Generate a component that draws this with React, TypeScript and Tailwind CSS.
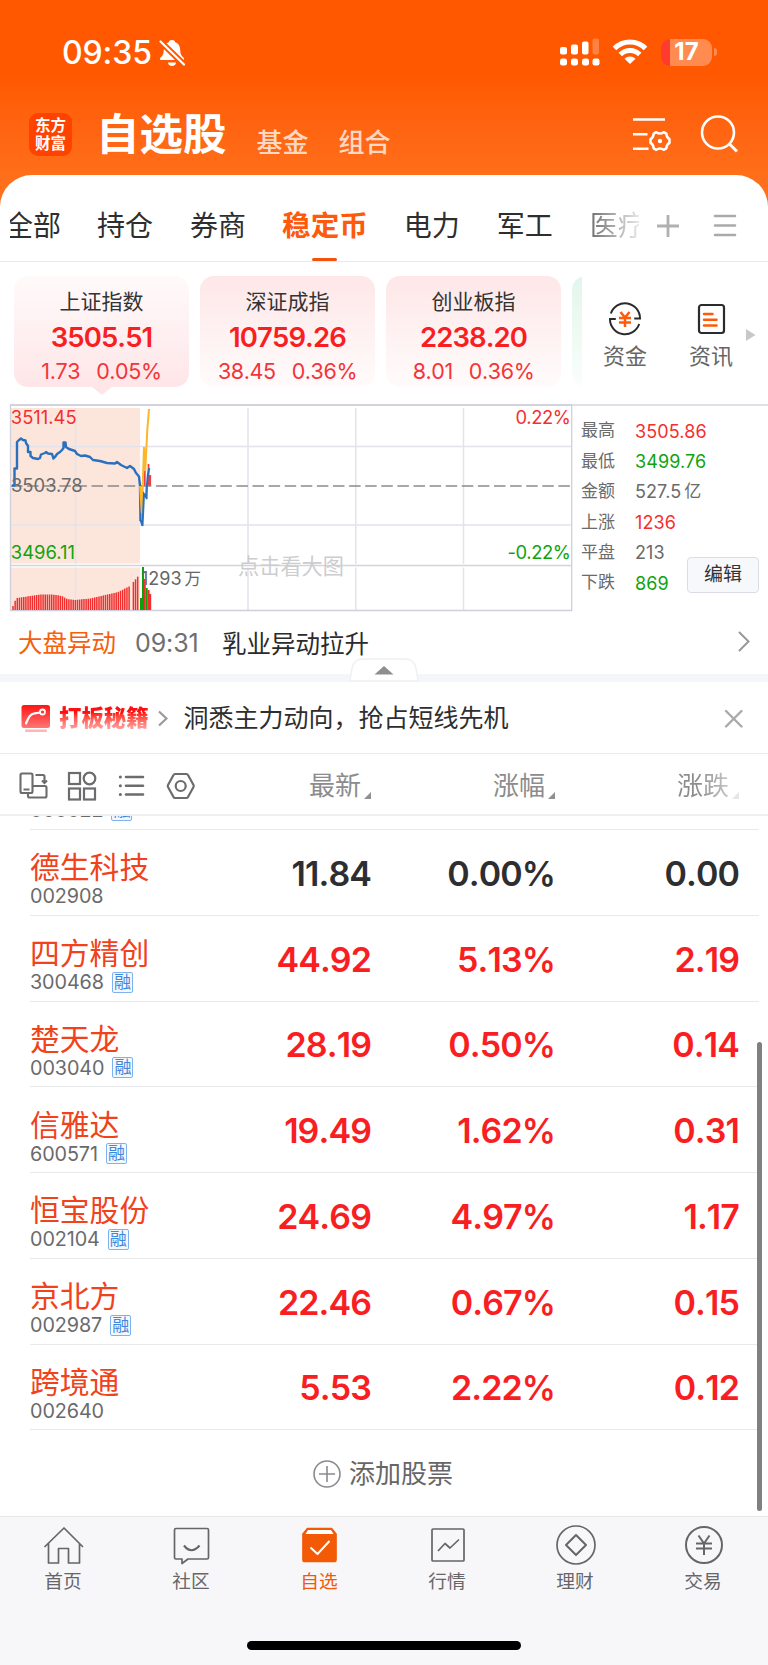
import type { ReactNode } from "react"

type Stock = {
  name: string
  code: string
  margin: boolean
  price: string
  percent: string
  change: string
  flat?: boolean
}

const stocks: Stock[] = [
  { name: "德生科技", code: "002908", margin: false, price: "11.84", percent: "0.00%", change: "0.00", flat: true },
  { name: "四方精创", code: "300468", margin: true, price: "44.92", percent: "5.13%", change: "2.19" },
  { name: "楚天龙", code: "003040", margin: true, price: "28.19", percent: "0.50%", change: "0.14" },
  { name: "信雅达", code: "600571", margin: true, price: "19.49", percent: "1.62%", change: "0.31" },
  { name: "恒宝股份", code: "002104", margin: true, price: "24.69", percent: "4.97%", change: "1.17" },
  { name: "京北方", code: "002987", margin: true, price: "22.46", percent: "0.67%", change: "0.15" },
  { name: "跨境通", code: "002640", margin: false, price: "5.53", percent: "2.22%", change: "0.12" },
]

const indices = [
  { name: "上证指数", value: "3505.51", diff: "1.73", percent: "0.05%", active: true },
  { name: "深证成指", value: "10759.26", diff: "38.45", percent: "0.36%", active: false },
  { name: "创业板指", value: "2238.20", diff: "8.01", percent: "0.36%", active: false },
]

const summary = [
  { label: "最高", value: "3505.86", color: "text-[#f52f2f]" },
  { label: "最低", value: "3499.76", color: "text-[#0fa30f]" },
  { label: "金额", value: "527.5", unit: "亿", color: "text-[#6b6b6b]" },
  { label: "上涨", value: "1236", color: "text-[#f52f2f]" },
  { label: "平盘", value: "213", color: "text-[#6b6b6b]" },
  { label: "下跌", value: "869", color: "text-[#0fa30f]" },
]

const StatusBar = () => (
  <div className="flex h-[104px] items-center pl-[62px] pr-[51px] text-white">
    <span className="pt-[2px] text-[32px] leading-none font-medium tracking-[-0.1px]">09:35</span>
    <svg className="ml-[7px] mt-[2px]" width="26" height="28" viewBox="0 0 26 28" fill="none">
      <path d="M13 1c-1.700 0-3 .8-3.200 2.200C6.500 4.300 5 7 4.800 11c-.1 4-1 5.500-3 7.300C.3 19.800.8 21 2.300 21h21.400c1.500 0 2-1.200.5-2.700-2-1.800-2.900-3.300-3-7.300-.2-4-1.700-6.700-5-7.800C16 1.800 14.700 1 13 1z" fill="#fff" />
      <path d="M9 23.500h8c0 2-1.800 3.500-4 3.500s-4-1.500-4-3.500z" fill="#fff" />
      <path d="M1 2L25 25.500" stroke="#ff5800" strokeWidth="6" />
      <path d="M1.500 2.500L25 25.500" stroke="#fff" strokeWidth="2.200" strokeLinecap="round" />
    </svg>
    <div className="grow" />
    <svg width="40" height="28" viewBox="0 0 40 28" fill="#fff">
      <rect x="0" y="9" width="7" height="7.500" rx="2" />
      <rect x="11" y="6.500" width="7" height="10" rx="2" />
      <rect x="22" y="3.500" width="6.500" height="13" rx="2" />
      <rect x="32.500" y="0.500" width="6.500" height="16" rx="2" opacity=".25" />
      <rect x="0" y="20.500" width="7" height="7" rx="2.200" />
      <rect x="11" y="20.500" width="7" height="7" rx="2.200" />
      <rect x="22" y="20.500" width="7" height="7" rx="2.200" />
      <rect x="32.500" y="20.500" width="7" height="7" rx="2.200" />
    </svg>
    <svg className="ml-3" width="36" height="26" viewBox="0 0 36 26" fill="none" stroke="#fff" strokeWidth="5">
      <path d="M2.500 9.500a22 22 0 0 1 31 0" />
      <path d="M8.300 15.500a13.800 13.800 0 0 1 19.400 0" />
      <path d="M18 25l-5.500-5.200a8 8 0 0 1 11 0z" fill="#fff" stroke="none" />
    </svg>
    <div className="ml-[13px] flex h-[27px] w-[51px] items-center justify-center overflow-hidden rounded-[9px] bg-[linear-gradient(90deg,#ff3b30_0_9px,#ff8b50_9px)] text-[24px] leading-none font-bold">
      17
    </div>
    <div className="ml-[2px] h-2 w-[3px] rounded-r-full bg-[#ff8b50]" />
  </div>
)

const TitleBar = () => (
  <div className="flex h-[71px] items-start pl-[29px] text-white">
    <div className="mt-[9px] flex h-[43px] w-[43px] flex-col items-center justify-center rounded-[9px] bg-[#ff4200] text-[15.500px] leading-[18px] font-bold">
      <span>东方</span>
      <span>财富</span>
    </div>
    <h1 className="ml-[24px] mt-px text-[43.500px] leading-[58px] font-bold">自选股</h1>
    <span className="ml-[30px] mt-[19px] text-[26px] leading-[40px] font-medium text-white/75">基金</span>
    <span className="ml-[30px] mt-[19px] text-[26px] leading-[40px] font-medium text-white/75">组合</span>
    <div className="grow" />
    <svg className="mt-[12px]" width="40" height="38" viewBox="0 0 40 38" fill="none" stroke="#fff" strokeWidth="2.600">
      <path d="M1 3.500h32M1 18.300h14.500M1 32.700h15.500" />
      <path d="M24.300 16.200q3.700 2.600 7.400 0l2.600 1.500q.3 4 3.200 5.500v3.600q-2.900 1.500-3.200 5.500l-2.600 1.500q-3.700-2.600-7.400 0l-2.600-1.500q-.3-4-3.200-5.500v-3.600q2.900-1.500 3.200-5.500z" strokeWidth="2.500" strokeLinejoin="round" />
      <circle cx="28" cy="25" r="2.200" fill="#fff" stroke="none" />
    </svg>
    <svg className="ml-[28px] mr-[28px] mt-[10px]" width="40" height="40" viewBox="0 0 40 40" fill="none" stroke="#fff" strokeWidth="2.600">
      <circle cx="18" cy="18.500" r="16" />
      <path d="M29 29.500l8 8" strokeWidth="3" />
    </svg>
  </div>
)

const Tabs = () => (
  <div className="flex h-[87px] items-stretch border-b border-[#eaeaec] text-[28px] leading-[102px] text-[#2e2e30]">
    <div className="ml-[10px] flex w-[51px] justify-end overflow-hidden whitespace-nowrap">
      <span>全部</span>
    </div>
    <span className="ml-[36px]">持仓</span>
    <span className="ml-[37px]">券商</span>
    <div className="ml-[36px] flex flex-col items-center">
      <span className="h-[83px] text-[28.600px] font-bold text-[#ff5a0a]">稳定币</span>
      <div className="h-[3px] w-[25px] rounded-sm bg-[#f4520d]" />
    </div>
    <span className="ml-[36px]">电力</span>
    <span className="ml-[37px]">军工</span>
    <div className="ml-[37px] w-[49px] overflow-hidden whitespace-nowrap bg-[linear-gradient(90deg,#6f6f70,#e8e8e8)] bg-clip-text text-transparent">
      医疗
    </div>
    <svg className="ml-[17px] mt-[39px]" width="24" height="24" viewBox="0 0 24 24" stroke="#b0b0b0" strokeWidth="2.800">
      <path d="M12 1v22M1 12h22" />
    </svg>
    <svg className="ml-[33px] mt-[39px]" width="24" height="24" viewBox="0 0 24 24" stroke="#aaa" strokeWidth="2.600" strokeLinecap="round">
      <path d="M2 2h20M2 11.500h20M2 21h20" />
    </svg>
  </div>
)

const IndexStrip = () => (
  <div className="flex h-[142px] pt-[14px] pl-[14px]">
    <div className="flex w-[568px] gap-[11px] overflow-hidden">
      {indices.map((item) => (
        <div key={item.name} className="flex shrink-0 flex-col items-center">
          <div
            className={
              item.active
                ? "flex h-[111px] w-[175px] flex-col items-center rounded-[14px] bg-linear-to-b from-[#fffafa] to-[#fee6e8]"
                : "flex h-[111px] w-[175px] flex-col items-center rounded-[14px] bg-linear-to-b from-[#fee7e8] to-[#fffbfb]"
            }
          >
            <span className="mt-[11px] text-[21px] leading-[30px] text-[#333]">{item.name}</span>
            <span className="mt-[4px] text-[27.500px] leading-[32px] font-semibold tracking-[-0.900px] text-[#f81e22] [font-kerning:none]">
              {item.value}
            </span>
            <span className="mt-[5px] flex gap-[16px] text-[21.500px] leading-[26px] tracking-[-0.400px] text-[#f43438] [font-kerning:none]">
              <span>{item.diff}</span>
              <span>{item.percent}</span>
            </span>
          </div>
          {item.active && (
            <svg width="20" height="8" viewBox="0 0 20 8">
              <path d="M0 0h20l-10 8z" fill="#fee6e8" />
            </svg>
          )}
        </div>
      ))}
      <div className="h-[111px] w-[175px] shrink-0 rounded-[14px] bg-linear-to-b from-[#e2f6ec] to-[#fafefc]" />
    </div>
    <div className="ml-[20px] flex flex-col items-center pt-[26px] text-[22px] text-[#666]">
      <svg className="ml-px" width="34" height="34" viewBox="0 0 34 34" fill="none" stroke="#2b2b2b" strokeWidth="2">
        <path d="M2.800 11.500A15 15 0 0 1 32 16.500h-5.800" />
        <path d="M31.200 22A15 15 0 0 1 2 17h5.800" />
        <path d="M12.500 10l4.500 5.500 4.500-5.500M11 16h12M11 20.500h12M17 15.500v9.500" stroke="#ff5a0a" strokeWidth="2.500" />
      </svg>
      <span className="mt-[3px] ml-px leading-[34px]">资金</span>
    </div>
    <div className="ml-[41px] flex flex-col items-center pt-[26px] text-[22px] text-[#666]">
      <svg className="ml-px" width="34" height="34" viewBox="0 0 34 34" fill="none" stroke="#2b2b2b" strokeWidth="2.200">
        <rect x="5" y="3" width="25" height="28" rx="2.500" />
        <path d="M10 12h8.500M10 17.700h12.500M10 23.500h12.500" stroke="#ff5a0a" strokeWidth="2.500" strokeLinecap="round" />
      </svg>
      <span className="mt-[3px] ml-px leading-[34px]">资讯</span>
    </div>
    <svg className="ml-[13px] mt-[53px]" width="10" height="12" viewBox="0 0 10 12">
      <path d="M0 0l9.500 6L0 12z" fill="#c8c8c8" />
    </svg>
  </div>
)

// [x, height] samples of the volume curve, bars are interpolated between them
const volume = [
  [13, 4], [15, 9], [17, 12], [27, 13.5], [40, 15.5], [53, 15.500], [62, 14], [67, 11],
  [75, 10], [90, 11.500], [105, 15], [118, 18], [130, 24], [135, 30], [139, 35],
]

const volumeAt = (x: number) => {
  const i = Math.max(1, volume.findIndex(([vx]) => vx >= x))
  const [x0, h0] = volume[i - 1]
  const [x1, h1] = volume[i]
  return h0 + ((h1 - h0) * (x - x0)) / (x1 - x0)
}

const bars = Array.from({ length: 59 }, (_, i) => 13 + i * 2.15).filter((_, i) => i !== 55)

const priceLine =
  "12,485.500 14.500,485.500 14.500,468.500 17,468.500 17,442 19,440 21,438.500 23,440 25.500,440.500 26,443 28,446 28,452 30.500,452 30.500,456 33,458 38,459 40,458 41,454.500 45,453 46,452 48,453.500 52,454 53.500,458.500 55,457 57,454 60,452 62,450 63.500,448 63.500,442.500 65.500,442.500 66,447 69,449 75,451 77,454 81,456 85,455.500 90,457 93,460 100,461 107,463 115,463.500 117,462 121,465 127,468 130,466 134,469 136,473 139,476.500 140,485.500 140.500,521"

const Chart = () => (
  <svg className="shrink-0" width="576" height="212" viewBox="0 402 576 212" fill="none">
    <rect x="11" y="408" width="129" height="155.500" fill="#fce6db" />
    <rect x="11" y="567.500" width="129" height="43" fill="#fce6db" />
    <g stroke="#e2e3ec" strokeWidth="1.500">
      <path d="M11 446.500h561M11 525h561" />
      <path d="M75.500 408v156M248 408v156M355.800 408v156M463.500 408v156" />
      <path d="M75.500 567.500v43M248 567.500v43M355.800 567.500v43M463.500 567.500v43" />
    </g>
    <path d="M11 565.500h561" stroke="#d3d4dc" strokeWidth="1.300" />
    <path d="M10.500 405v205.500h561.200V405z" stroke="#cfd0da" strokeWidth="1.300" />
    <g stroke="#f22d2d" strokeWidth="1.500">
      {bars.map((x) => (
        <path key={x} d={`M${x} 610v${-volumeAt(x)}`} />
      ))}
    </g>
    <g strokeWidth="2">
      <path d="M141 610v-12M143 610v-43M146.700 610v-22" stroke="#0aa10a" />
      <path d="M144.800 610v-31M148.600 610v-20M150.200 610v-16" stroke="#f22d2d" />
      <path d="M144.800 486v-16M148.500 486v-22M150.200 486v-11" stroke="#f04040" strokeWidth="1.800" />
      <path d="M146.700 486v13" stroke="#0aa10a" strokeWidth="1.800" />
    </g>
    <path d="M11 486h561" stroke="#8a8a8a" strokeWidth="1.600" strokeDasharray="11.500 4.600" />
    <polyline points={priceLine} stroke="#2b70bf" strokeWidth="2.400" strokeLinejoin="round" />
    <path d="M140 486l1.800 27L144 447l1.200 24L147.300 430l1.700-21" stroke="#fdb52a" strokeWidth="2" />
    <path d="M140.500 520l2 6L144 494l2 3 1.800-22 1.500-7" stroke="#2b70bf" strokeWidth="2" />
    <g fontSize="18.400">
      <text x="10.800" y="424" fill="#f52f2f">3511.45</text>
      <text x="11" y="491.500" fill="#6b6b6b">3503.78</text>
      <text x="10.800" y="559" fill="#0fa30f">3496.11</text>
      <text x="570.500" y="424" textAnchor="end" fill="#f52f2f" letterSpacing="-.4">0.22%</text>
      <text x="570.500" y="559" textAnchor="end" fill="#0fa30f" letterSpacing="-.4">-0.22%</text>
      <text x="141" y="585" fill="#666" fontSize="18">1293<tspan dx="3" fontSize="16.500">万</tspan></text>
      <text x="238" y="573.500" fill="#cdcdcf" fontSize="21.200">点击看大图</text>
    </g>
  </svg>
)

const Market = () => (
  <div className="flex h-[212px] bg-[linear-gradient(#dfdfe6,#dfdfe6)] bg-[length:758px_2px] bg-[position:10px_2px] bg-no-repeat">
    <Chart />
    <div className="flex flex-col pt-[14px] pl-[5px]">
      {summary.map((row) => (
        <div key={row.label} className="flex h-[30.400px] items-center">
          <span className="w-[54px] text-[17px] text-[#6b6b6b]">{row.label}</span>
          <span className={`text-[18px] tracking-[0.100px] ${row.color}`}>{row.value}</span>
          {row.unit && <span className="ml-[3px] text-[17px] text-[#6b6b6b]">{row.unit}</span>}
        </div>
      ))}
    </div>
    <button className="absolute top-[557px] left-[687px] h-9 w-[72px] rounded-[4px] border border-[#dcdde4] bg-[#f7f8fb] text-[19px] leading-[34px] text-[#333]">
      编辑
    </button>
  </div>
)

const NewsRow = () => (
  <div className="flex h-[60px] items-center pl-[18px] pr-[18px] text-[24.500px]">
    <span className="-mt-[2px] text-[#f4600c]">大盘异动</span>
    <span className="ml-[19px] w-[87px] text-[25px] tracking-[-0.100px] text-[#6f6f6f]">09:31</span>
    <span className="text-[#2b2b2b]">乳业异动拉升</span>
    <div className="grow" />
    <svg className="-mt-[5px]" width="12" height="21" viewBox="0 0 12 21" fill="none" stroke="#999" strokeWidth="2" strokeLinecap="round">
      <path d="M1.500 1.500l9 9-9 9" />
    </svg>
  </div>
)

const Divider = () => (
  <div className="relative h-2 bg-[#f5f6f9]">
    <svg className="absolute -top-4 left-[349px]" width="70" height="24" viewBox="0 0 70 24">
      <path d="M1 23l2-13Q5 1 14 1h42q9 0 11 9l2 13z" fill="#fff" stroke="#eff0f3" strokeWidth="1.500" />
      <path d="M35 8l9.500 8.500h-19z" fill="#8e8e8e" />
    </svg>
  </div>
)

const Promo = () => (
  <div className="flex h-[72px] items-center border-b border-[#ebebed] pl-[21px] pr-[25px]">
    <svg className="mt-[3px]" width="30" height="30" viewBox="0 0 30 30" fill="none">
      <defs>
        <linearGradient id="promo" x1="0" y1="0" x2="0" y2="1">
          <stop offset="0" stopColor="#ff1414" />
          <stop offset="1" stopColor="#ff7676" />
        </linearGradient>
      </defs>
      <rect x="0.500" y="1" width="28.500" height="23" rx="2.500" fill="url(#promo)" />
      <rect x="4" y="25.500" width="22" height="2.500" rx="1" fill="#ffb5b5" />
      <path d="M5 19.500q3.500-9 7.500-9.800l6.500-1.200" stroke="#fff" strokeWidth="2.200" strokeLinecap="round" />
      <circle cx="21.500" cy="8" r="2.500" stroke="#fff" strokeWidth="1.800" />
    </svg>
    <span className="ml-[8px] bg-linear-to-b from-[#ff1010] from-35% to-[#ff9a9a] to-80% bg-clip-text text-[22.400px] leading-[34px] font-black text-transparent">
      打板秘籍
    </span>
    <svg className="ml-[9px] mt-px" width="10" height="17" viewBox="0 0 10 17" fill="none" stroke="#999" strokeWidth="2.200">
      <path d="M1 1.500l7.500 7-7.500 7" />
    </svg>
    <span className="ml-[16px] pt-[3px] text-[25px] text-[#2e2e30]">洞悉主力动向，抢占短线先机</span>
    <div className="grow" />
    <svg className="mt-px" width="19" height="19" viewBox="0 0 19 19" stroke="#aaa" strokeWidth="2.400" strokeLinecap="round">
      <path d="M2 2l15.500 15.500M17.500 2L2 17.500" />
    </svg>
  </div>
)

const SortMark = ({ color }: { color: string }) => (
  <svg className="mt-[19px] ml-[3px]" width="7" height="7" viewBox="0 0 7 7">
    <path d="M7 0v7H0z" fill={color} />
  </svg>
)

const Toolbar = () => (
  <div className="flex h-[62px] items-center border-b-2 border-[#efeff1] pt-[3px] pl-[19px] text-[26px] text-[#8c8c8e]">
    <svg width="29" height="28" viewBox="0 0 29 28" fill="none" stroke="#6c6c6e" strokeWidth="2.100">
      <rect x="1.500" y="1.500" width="12" height="19.500" rx="1.500" />
      <path d="M4.500 17.500h6M16.500 3H24q1.500 0 1.500 1.500V10M23 8.500l2.500 2.500L28 8.500" />
      <path d="M13.500 14H26q1.500 0 1.500 1.500V24q0 1.500-1.500 1.500H10.500Q9 25.500 9 24v-3" />
    </svg>
    <svg className="ml-[19px]" width="30" height="30" viewBox="0 0 30 30" fill="none" stroke="#6c6c6e" strokeWidth="2.200">
      <rect x="2" y="2" width="11" height="11" />
      <circle cx="22.500" cy="7.500" r="5.800" />
      <rect x="2" y="17.500" width="11" height="11" />
      <rect x="17" y="17.500" width="11" height="11" />
    </svg>
    <svg className="ml-[21px]" width="28" height="28" viewBox="0 0 28 28" fill="none" stroke="#6c6c6e" strokeWidth="2.600" strokeLinecap="round">
      <path d="M8 5h17M8 13.700h17M8 22.500h17" />
      <path d="M2.300 5h.1M2.300 13.700h.1M2.300 22.500h.1" strokeWidth="3" />
    </svg>
    <svg className="ml-[20px]" width="30" height="28" viewBox="0 0 30 28" fill="none" stroke="#6c6c6e" strokeWidth="2.200" strokeLinejoin="round">
      <path d="M9 2h11.500q1 0 1.500 1l5.500 10q.5 1 0 2L22 25q-.5 1-1.500 1H9q-1 0-1.500-1L2 15q-.5-1 0-2L7.500 3Q8 2 9 2z" />
      <circle cx="14.700" cy="14" r="5" />
    </svg>
    <div className="flex w-[175px] items-center justify-end">
      最新
      <SortMark color="#909094" />
    </div>
    <div className="flex w-[184px] items-center justify-end">
      涨幅
      <SortMark color="#909094" />
    </div>
    <div className="flex w-[184px] items-center justify-end">
      <span className="bg-[linear-gradient(90deg,#8c8c8e_40%,#c8c8c9)] bg-clip-text text-transparent">涨跌</span>
      <SortMark color="#e6e6e8" />
    </div>
  </div>
)

const MarginBadge = () => (
  <span className="flex h-[21px] w-[21px] items-center justify-center rounded-[2px] border border-[#7fb1ef] bg-[#f3f8fe] text-[17px] leading-[17px] text-[#3f87dc]">
    融
  </span>
)

const Code = ({ code, margin }: { code: string; margin: boolean }) => (
  <div className="flex h-[22px] items-center gap-[8px] text-[19.800px] leading-[22px] tracking-[-0.100px] text-[#6a6a6c]">
    <span>{code}</span>
    {margin && <MarginBadge />}
  </div>
)

const StockRow = ({ stock }: { stock: Stock }) => (
  <div className="ml-[30px] flex h-[85.760px] items-center border-b border-[#e9e9eb] mr-[9px]">
    <div className="w-[150px] pt-[12px]">
      <div className="text-[29.800px] leading-[36px] whitespace-nowrap text-[#f1421b]">{stock.name}</div>
      <Code code={stock.code} margin={stock.margin} />
    </div>
    <div
      className={`flex grow pt-[3px] text-right text-[34px] leading-[40px] font-semibold tracking-[-0.900px] [font-kerning:none] ${
        stock.flat ? "text-[#2e2e30]" : "text-[#f81e22]"
      }`}
    >
      <span className="w-[191px]">{stock.price}</span>
      <span className="w-[184px]">{stock.percent}</span>
      <span className="w-[184px]">{stock.change}</span>
    </div>
  </div>
)

const NavItem = ({ label, active, children }: { label: string; active?: boolean; children: ReactNode }) => (
  <div className={`flex w-32 flex-col items-center ${active ? "text-[#f25a06]" : "text-[#666668]"}`}>
    <svg width="42" height="42" viewBox="0 0 42 42" fill="none" stroke="currentColor" strokeWidth="1.700" strokeLinejoin="round">
      {children}
    </svg>
    <span className="mt-[2px] mr-[2px] text-[18.700px] leading-[28px]">{label}</span>
  </div>
)

const BottomNav = () => (
  <div className="h-[149px] border-t border-[#e6e6e9] bg-[#f7f7fa]">
    <div className="flex h-[124px] pt-[7px]">
      <NavItem label="首页">
        <path d="M1.500 23L21 4l19 19M5.500 19.500V39h10V24.500h10V39h11V19.500" />
      </NavItem>
      <NavItem label="社区">
        <path d="M5 4.500h31q1.500 0 1.500 1.500v27.500q0 1.500-1.500 1.500H17l-6 4.500V35H5q-1.500 0-1.500-1.500V6q0-1.500 1.500-1.500z" />
        <path d="M13 21.500q7.500 9.500 15.500 0" strokeWidth="2.200" />
      </NavItem>
      <NavItem label="自选" active>
        <path d="M8.500 4.500h24l4.500 5.500v25.500q0 2-2 2H6q-2 0-2-2V10z" fill="currentColor" />
        <path d="M9 6h23l2.500 4h-28z" fill="#fff" stroke="none" />
        <path d="M11.500 23.500l7 6.500 12-13" stroke="#fff" strokeWidth="2" />
      </NavItem>
      <NavItem label="行情">
        <rect x="5" y="5" width="32" height="32" rx="1" />
        <path d="M11 27l7-7.500 5 4.500 9-8.500" />
      </NavItem>
      <NavItem label="理财">
        <circle cx="21" cy="21" r="19" />
        <path d="M21 11l10 10-10 10-10-10z" strokeWidth="2" />
      </NavItem>
      <NavItem label="交易">
        <circle cx="21" cy="21" r="18" strokeWidth="2" />
        <path d="M15.500 11.500l5.500 8 5.500-8M13 19.500h16M13 24.500h16M21 19.500V31" strokeWidth="2" />
      </NavItem>
    </div>
    <div className="mx-auto h-[9px] w-[274px] rounded-full bg-black" />
  </div>
)

export default function App() {
  return (
    <div className="relative flex h-[1665px] w-[768px] flex-col overflow-hidden bg-linear-to-b from-[#ff5800] from-[72px] to-[#ff701c] to-[185px] font-[Inter,'Noto_Sans_CJK_SC',sans-serif] *:shrink-0">
      <StatusBar />
      <TitleBar />
      <div className="rounded-t-[32px] bg-white">
        <Tabs />
        <IndexStrip />
        {/* tail of the strip overlaps the chart by a couple of pixels */}
        <div className="-mt-[2px]">
          <Market />
          <NewsRow />
        </div>
        <Divider />
        <Promo />
        <Toolbar />
        <div className="ml-[30px] mr-[9px] flex h-[14px] flex-col justify-end overflow-hidden border-b border-[#e9e9eb] pb-[8px]">
          <Code code="000022" margin />
        </div>
        {stocks.map((stock) => (
          <StockRow key={stock.code} stock={stock} />
        ))}
        <div className="flex h-[86px] items-center justify-center gap-[8px] pt-px pr-[2px] text-[26px] text-[#666668]">
          <svg width="28" height="28" viewBox="0 0 28 28" fill="none" stroke="#8a8a90" strokeWidth="1.600">
            <circle cx="14" cy="14" r="13" />
            <path d="M14 6v16M6 14h16" />
          </svg>
          添加股票
        </div>
        <BottomNav />
      </div>
      <div className="absolute top-[1042px] left-[757px] h-[469px] w-[5px] rounded-full bg-[#808080]" />
    </div>
  )
}
